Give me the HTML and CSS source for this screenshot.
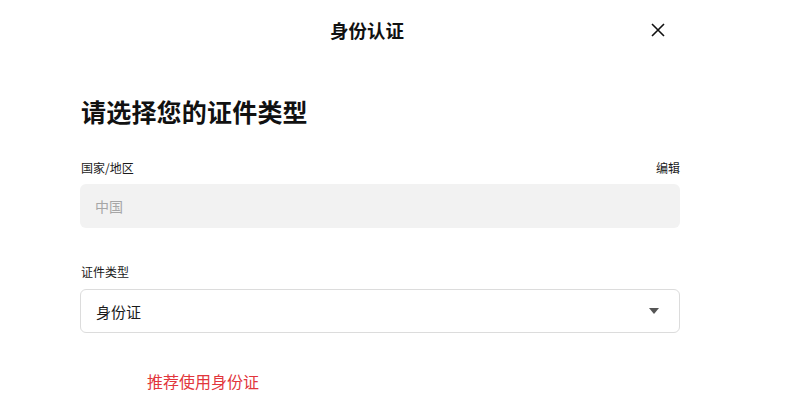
FILE: index.html
```html
<!DOCTYPE html>
<html lang="zh-CN">
<head>
<meta charset="utf-8">
<title>身份认证</title>
<link rel="stylesheet" href="styles.css">
</head>
<body>
<div class="page">
  <header class="topbar">
    <h1 class="topbar-title">身份认证</h1>
    <button class="close" aria-label="关闭">
      <svg width="14" height="14" viewBox="0 0 14 14"><path d="M1 1L13 13M13 1L1 13" stroke="#111" stroke-width="1.6" fill="none"/></svg>
    </button>
  </header>
  <main class="content">
    <h2 class="heading">请选择您的证件类型</h2>
    <div class="field field-country">
      <div class="label-row">
        <span class="label">国家/地区</span>
        <span class="edit">编辑</span>
      </div>
      <div class="input input-disabled">中国</div>
    </div>
    <div class="field field-type">
      <div class="label-row">
        <span class="label">证件类型</span>
      </div>
      <div class="input select">
        <span>身份证</span>
        <svg class="caret" width="10" height="6" viewBox="0 0 10 6"><path d="M0 0H10L5 6Z" fill="#555"/></svg>
      </div>
    </div>
    <p class="hint">推荐使用身份证</p>
  </main>
</div>
</body>
</html>
```

FILE: styles.css
```css
* { box-sizing: border-box; }
html, body { margin: 0; padding: 0; background: #fff; }
body {
  font-family: "Noto Sans CJK SC", "Noto Sans", "Liberation Sans", sans-serif;
  color: #222;
  width: 800px;
  height: 405px;
  overflow: hidden;
}
.topbar {
  height: 60px;
  display: flex;
  align-items: center;
  padding: 0 135px 0 330px;
}
.topbar-title {
  margin: 0;
  font-size: 18.5px;
  font-weight: 700;
  color: #111;
  line-height: 24px;
}
.close {
  margin-left: auto;
  border: 0;
  background: none;
  padding: 0;
  width: 14px;
  height: 14px;
  display: flex;
}
.content {
  padding: 0 120px 0 80px;
}
.heading {
  margin: 34px 0 0 1px;
  font-size: 25px;
  line-height: 35px;
  font-weight: 600;
  color: #111;
  letter-spacing: 0.2px;
}
.field-country { margin-top: 30px; }
.field-type { margin-top: 35px; }
.label-row {
  display: flex;
  justify-content: space-between;
  font-size: 12px;
  line-height: 17px;
  color: #1a1a1a;
  padding: 0 0 0 1px;
}
.edit { color: #1a1a1a; }
.input {
  margin-top: 8px;
  height: 44px;
  border-radius: 6px;
  display: flex;
  align-items: center;
  padding: 0 15px;
}
.input-disabled {
  background: #f2f2f2;
  color: #a6a6a6;
  font-size: 14px;
}
.select {
  margin-top: 9px;
  border: 1px solid #dcdcdc;
  background: #fff;
  color: #1a1a1a;
  font-size: 15px;
  justify-content: space-between;
  padding-right: 20px;
}
.caret { display: block; }
.hint {
  margin: 37px 0 0 67px;
  font-size: 16px;
  line-height: 22px;
  color: #e2363c;
}
```
